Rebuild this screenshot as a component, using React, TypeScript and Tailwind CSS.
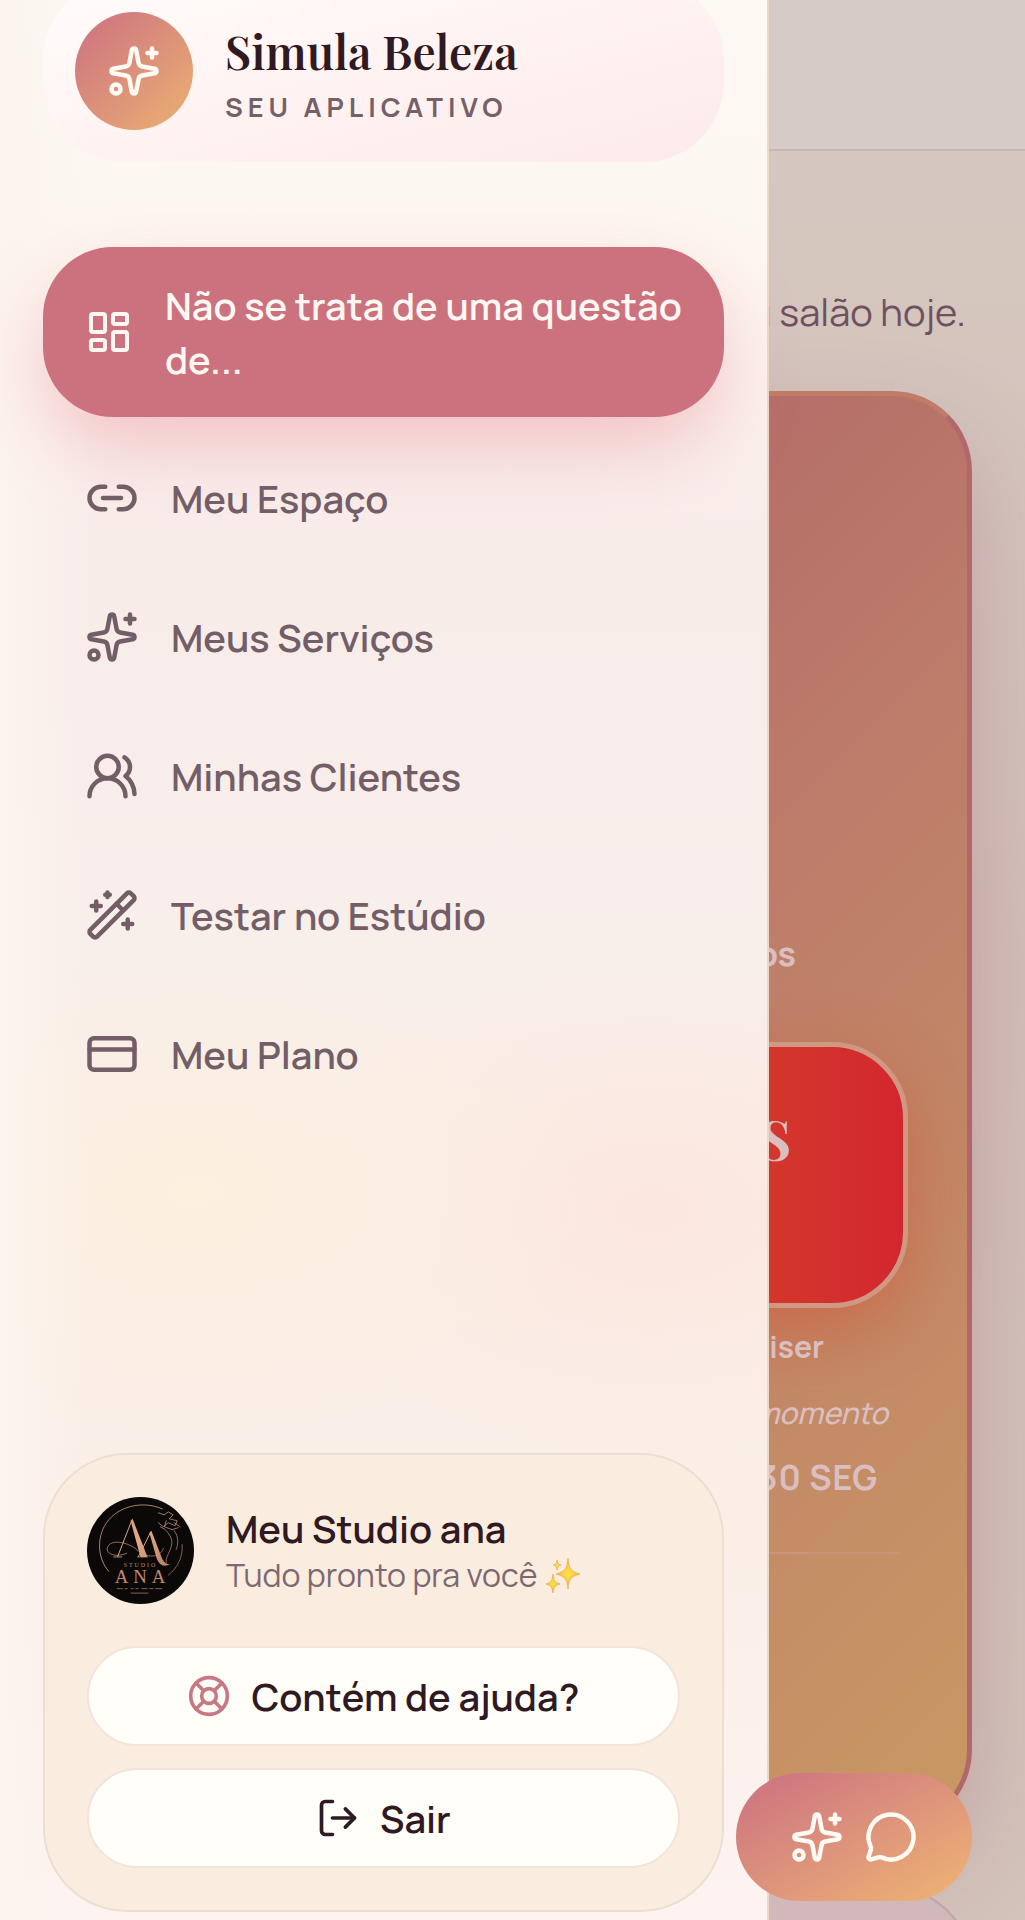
import React from "react";
import {
  CreditCard,
  LayoutDashboard,
  LifeBuoy,
  Link2,
  LogOut,
  MessageCircle,
  Sparkles,
  UsersRound,
  WandSparkles
} from "lucide-react";

const links = [
  { label: "Meu Espaço", icon: Link2 },
  { label: "Meus Serviços", icon: Sparkles },
  { label: "Minhas Clientes", icon: UsersRound },
  { label: "Testar no Estúdio", icon: WandSparkles },
  { label: "Meu Plano", icon: CreditCard }
];

const serif = "font-['Playfair_Display','Liberation_Serif',serif]";

function StudioLogo() {
  return (
    <svg viewBox="0 0 108 108" className="size-[107px] shrink-0" role="img" aria-label="Meu Studio ana">
      <defs>
        <linearGradient id="copper" gradientUnits="userSpaceOnUse" x1="20" y1="10" x2="88" y2="98">
          <stop offset="0" stopColor="#c99273" />
          <stop offset="0.4" stopColor="#e0ab8b" />
          <stop offset="1" stopColor="#a3694f" />
        </linearGradient>
      </defs>
      <circle cx="54" cy="54" r="54" fill="#0b0908" />
      <g fill="none" stroke="url(#copper)" strokeLinecap="round">
        <path d="M22 75C10 62 9 38 22 23C35 8 58 4 76 12" strokeWidth="1" opacity="0.8" />
        <path d="M96 48C97 60 92 71 82 79" strokeWidth="1" opacity="0.7" />
        <path d="M31 60L45 24" strokeWidth="1" />
        <path d="M52 60L64 36" strokeWidth="1" />
        <path d="M27 60.500h8M51 60.500h10" strokeWidth="0.8" />
        <path d="M40 57C26 62 18 56 21 50C25 42 42 46 50 53C60 62 74 62 77 52" strokeWidth="0.8" opacity="0.8" />
        <path
          d="M72 16l6 2 4-3 5 3-4 4 8 2-2 5-7-3-5 4-5-4M80 24l-2 6 8 3 6-2M74 30l5 3M88 26l6 4M80 34c4 5 7 9 5 16c-2 7-6 11-5 17M88 34c5 6 4 14 2 19"
          strokeWidth="1"
          opacity="0.7"
        />
      </g>
      <g fill="url(#copper)">
        <path d="M44 24L46 22L61 60.500H54Z" />
        <path d="M63 36L65 34L75 60C77 66 80 68 84 68C77 71 73 69 70 61Z" />
      </g>
      <g fill="#c08a6c" className="font-['Liberation_Serif',serif]">
        <text x="54" y="71" textAnchor="middle" fontSize="6" letterSpacing="2">
          STUDIO
        </text>
        <text x="56" y="87" textAnchor="middle" fontSize="19" letterSpacing="5">
          ANA
        </text>
      </g>
      <path
        d="M30 92.500h6m2 0h3m3 0h3m2 0h3m3 0h6m2 0h4m2 0h7M44 97h18"
        stroke="#8d5f49"
        strokeWidth="1"
      />
    </svg>
  );
}

function SparkleEmoji() {
  return (
    <svg viewBox="0 0 36 36" className="size-9 shrink-0" role="img" aria-label="✨">
      <defs>
        <radialGradient id="gold">
          <stop offset="0" stopColor="#ffe14d" />
          <stop offset="1" stopColor="#f3b93a" />
        </radialGradient>
      </defs>
      <g fill="url(#gold)" stroke="#e0a53c" strokeWidth="0.6">
        <path d="M23 1C24 12 26 14.500 35 17C26 19.500 24 22 23 32C22 22 20 19.500 11 17C20 14.500 22 12 23 1Z" />
        <path d="M8 17C9 24 10 25.500 15 27C10 28.500 9 30 8 36C7 30 6 28.500 1 27C6 25.500 7 24 8 17Z" />
        <path d="M12 3C12.500 6.500 13.500 7.500 16 8C13.500 8.500 12.500 9.500 12 13C11.500 9.500 10.500 8.500 8 8C10.500 7.500 11.500 6.500 12 3Z" />
      </g>
    </svg>
  );
}

function Dashboard() {
  return (
    <div className="flex flex-col">
      <header className="h-[151px] border-b-2 border-[#c8b8b1] bg-[#d6cbc7]" />
      <main className="flex flex-col px-[53px] pt-[133px]">
        <p className="pr-1.5 text-right text-[38px] leading-[54px] text-[#6f5060]">seu salão hoje.</p>

        <section className="mt-[53px] h-[1439px] rounded-[80px] border-[5px] border-[#b2676b] border-t-[#bf7c66] bg-linear-[135deg] from-[#a85866] via-[#bd7c6a] to-[#c99863] px-[59px] pt-[530px] text-right text-[#dbbfc0] shadow-[0_40px_90px_rgba(150,80,110,0.28)]">
          <p className="pr-[112px] text-[34px] leading-[54px] font-bold">os</p>
          <button
            type="button"
            className={`mt-[62px] flex h-[266px] w-full justify-end rounded-[76px] border-[5px] border-[#cf9883] bg-linear-to-r from-[#d4572a] via-[#d3392b] via-80% to-[#d3262f] pt-[60px] pr-[112px] text-[54px] leading-[64px] font-bold shadow-[0_24px_70px_rgba(208,70,40,0.45)] ${serif}`}
          >
            S
          </button>
          <p className="mt-4 pr-[84px] text-[30px] leading-[46px] font-bold">iser</p>
          <p className="mt-5 pr-5 text-[30px] leading-[46px] font-medium italic">no momento</p>
          <p className="mt-[18px] pr-[30px] text-[34px] leading-[46px] font-bold tracking-wide">30 SEG</p>
          <hr className="mx-2 mt-[52px] border-t-2 border-[#cb957b]" />
        </section>

        <section className="mt-[57px] h-[200px] rounded-[80px] border-2 border-[#bfa6a8] bg-[#d2b7bb]" />
      </main>
    </div>
  );
}

function Sidebar() {
  return (
    <aside className="absolute inset-y-0 left-0 flex w-3/4 flex-col border-r-2 border-[#ecd8c8] bg-[linear-gradient(to_right,#fcf4ee,transparent_12%),radial-gradient(ellipse_420px_240px_at_25%_62%,#fdf0dccc,transparent),radial-gradient(ellipse_380px_240px_at_85%_63%,#fde5dccc,transparent),linear-gradient(to_bottom,#fdf9f3,#fdf6f0_14%,#f8ece9_28%,#f8eeea_48%,#faeee7_80%,#fdf3f1)] px-[43px] pb-2">
      <div className="-mt-5 flex items-center gap-8 rounded-[80px] bg-linear-to-br from-[#fffdfc] via-[#fff3f2] to-[#fdeaeb] p-8">
        <div className="flex size-[118px] shrink-0 items-center justify-center rounded-full bg-linear-to-br from-[#cb7080] to-[#ecb170] text-[#fffaf2]">
          <Sparkles className="size-[54px]" strokeWidth={2} />
        </div>
        <div>
          <h1 className={`text-[46px] leading-[64px] font-semibold text-[#2f1922] ${serif}`}>Simula Beleza</h1>
          <p className="mt-2 text-[27px] leading-8 font-bold tracking-[5px] text-[#75606a]">SEU APLICATIVO</p>
        </div>
      </div>

      <nav className="mt-[85px] flex flex-col gap-[23px] text-[38px] leading-[54px] font-semibold">
        <a
          href="#"
          className="flex items-center gap-8 rounded-[70px] bg-[#cb727e] py-[31px] pr-6 pl-[42px] text-[#fff8f2] shadow-[0_32px_80px_-8px_rgba(230,110,130,0.4)]"
        >
          <LayoutDashboard className="size-12 shrink-0" strokeWidth={2} />
          <span>Não se trata de uma questão de...</span>
        </a>
        {links.map(({ label, icon: Icon }) => (
          <a key={label} href="#" className="flex items-center gap-8 py-[31px] pl-[42px] text-[#735e68]">
            <Icon className="size-[54px] shrink-0" strokeWidth={2} />
            <span>{label}</span>
          </a>
        ))}
      </nav>

      <div className="mt-auto rounded-[84px] border-2 border-[#ecdfd2] bg-[#faecdf] p-[42px] text-[#2f1922]">
        <div className="flex items-center gap-8">
          <StudioLogo />
          <div>
            <p className="text-[38px] leading-[48px] font-semibold">Meu Studio ana</p>
            <p className="flex items-center gap-2 text-[32px] leading-[46px] text-[#7d6871]">
              Tudo pronto pra você
              <SparkleEmoji />
            </p>
          </div>
        </div>
        <div className="mt-[42px] flex flex-col gap-[22px] text-[38px] leading-[54px] font-semibold">
          <button type="button" className="flex h-[100px] items-center justify-center gap-5 rounded-full border-2 border-[#efe5da] bg-[#fffef9]">
            <LifeBuoy className="size-11 text-[#c87883]" strokeWidth={2} />
            Contém de ajuda?
          </button>
          <button type="button" className="flex h-[100px] items-center justify-center gap-5 rounded-full border-2 border-[#efe5da] bg-[#fffef9]">
            <LogOut className="size-11" strokeWidth={2} />
            Sair
          </button>
        </div>
      </div>
    </aside>
  );
}

export default function App() {
  return (
    <div className="relative h-screen overflow-hidden bg-linear-to-b from-[#d6c9c1] via-[#d2beb8] to-[#d3c3bb] font-[Manrope,Inter,sans-serif]">
      <Dashboard />
      <Sidebar />

      {/* Floating chat shortcut */}
      <button
        type="button"
        aria-label="Conversar"
        className="absolute right-[53px] bottom-[19px] flex h-32 items-center gap-5 rounded-full bg-linear-to-br from-[#cb7080] to-[#efb572] px-[54px] text-[#fffaf2]"
      >
        <Sparkles className="size-[54px]" strokeWidth={2} />
        <MessageCircle className="size-[54px]" strokeWidth={2} />
      </button>
    </div>
  );
}
